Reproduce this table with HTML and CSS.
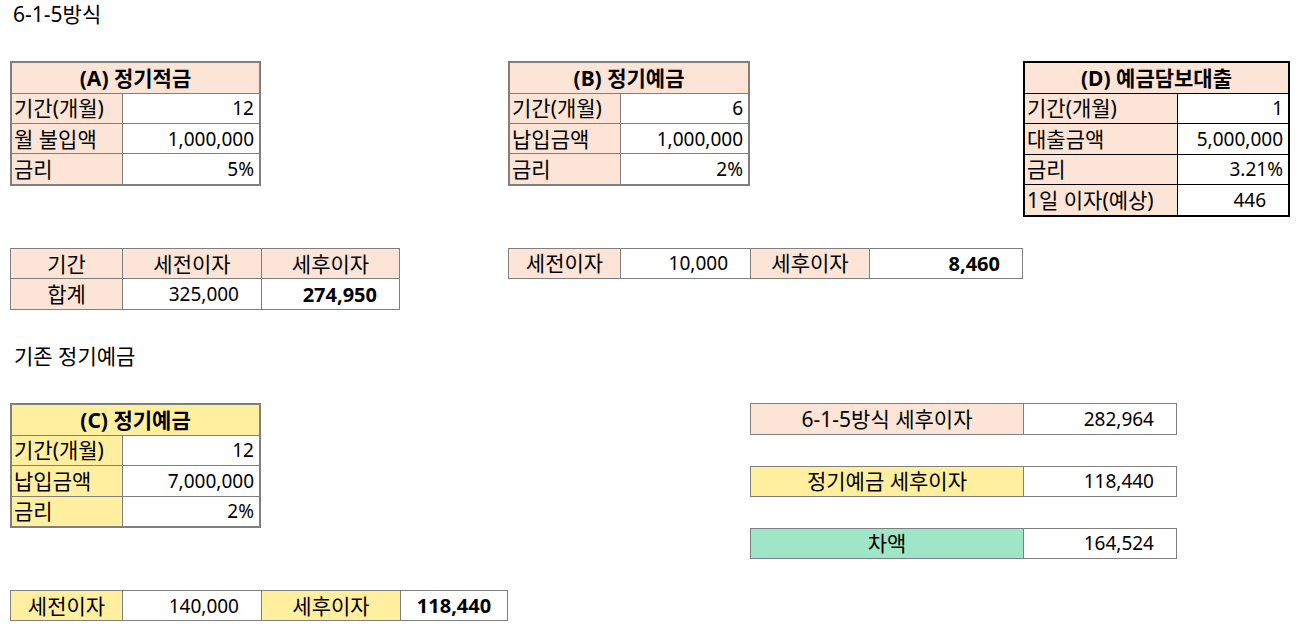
FILE: index.html
```html
<!DOCTYPE html>
<html lang="ko">
<head>
<meta charset="utf-8">
<title>6-1-5방식</title>
<link rel="stylesheet" href="styles.css">
</head>
<body>
<div class="sheet">
  <div class="title t1">6-1-5방식</div>

  <div class="box thick tA">
    <div class="c hd peach span2">(A) 정기적금</div>
    <div class="c lab peach">기간(개월)</div><div class="c num">12</div>
    <div class="c lab peach">월 불입액</div><div class="c num">1,000,000</div>
    <div class="c lab peach">금리</div><div class="c num">5%</div>
  </div>

  <div class="box thick tB">
    <div class="c hd peach span2">(B) 정기예금</div>
    <div class="c lab peach">기간(개월)</div><div class="c num">6</div>
    <div class="c lab peach">납입금액</div><div class="c num">1,000,000</div>
    <div class="c lab peach">금리</div><div class="c num">2%</div>
  </div>

  <div class="box thick black tD">
    <div class="c hd peach span2">(D) 예금담보대출</div>
    <div class="c lab peach">기간(개월)</div><div class="c num">1</div>
    <div class="c lab peach">대출금액</div><div class="c num">5,000,000</div>
    <div class="c lab peach">금리</div><div class="c num">3.21%</div>
    <div class="c lab peach">1일 이자(예상)</div><div class="c acct">446</div>
  </div>

  <div class="box sA">
    <div class="c ctr peach">기간</div><div class="c ctr peach">세전이자</div><div class="c ctr peach">세후이자</div>
    <div class="c ctr peach">합계</div><div class="c acct">325,000</div><div class="c acct b">274,950</div>
  </div>

  <div class="box sB">
    <div class="c ctr peach">세전이자</div><div class="c acct">10,000</div>
    <div class="c ctr peach">세후이자</div><div class="c acct b">8,460</div>
  </div>

  <div class="title t2">기존 정기예금</div>

  <div class="box thick tC">
    <div class="c hd yellow span2">(C) 정기예금</div>
    <div class="c lab yellow">기간(개월)</div><div class="c num">12</div>
    <div class="c lab yellow">납입금액</div><div class="c num">7,000,000</div>
    <div class="c lab yellow">금리</div><div class="c num">2%</div>
  </div>

  <div class="box cmp r1">
    <div class="c ctr peach">6-1-5방식 세후이자</div><div class="c acct">282,964</div>
  </div>
  <div class="box cmp r2">
    <div class="c ctr yellow">정기예금 세후이자</div><div class="c acct">118,440</div>
  </div>
  <div class="box cmp r3">
    <div class="c ctr green">차액</div><div class="c acct">164,524</div>
  </div>

  <div class="box sC">
    <div class="c ctr yellow">세전이자</div><div class="c acct">140,000</div>
    <div class="c ctr yellow">세후이자</div><div class="c ctr b">118,440</div>
  </div>
</div>
</body>
</html>
```

FILE: styles.css
```css
* { box-sizing: border-box; }

html, body {
  margin: 0;
  padding: 0;
  background: #ffffff;
}

body {
  font-family: "Noto Sans", "Noto Sans CJK KR", sans-serif;
  font-size: 21px;
  color: #000000;
  overflow: hidden;
}

.sheet {
  display: grid;
  grid-template-columns: 112px 139px 139px 108px 112px 130px 119px 154px 154px 113px;
  grid-template-rows: repeat(20, 31.12px);
  margin: -1px 0 0 10px;
  width: 1280px;
}

.title {
  display: flex;
  align-items: center;
  padding-left: 3px;
  white-space: nowrap;
  line-height: 1;
}
.t1 { grid-column: 1 / 3; grid-row: 1; }
.t2 { grid-column: 1 / 3; grid-row: 12; padding-left: 4px; }

.box {
  display: grid;
  gap: 1px;
  background: #7f7f7f;
  border: 1px solid #7f7f7f;
  grid-auto-rows: 1fr;
}
.box.thick { border-width: 2px; }
.box.black { background: #000000; border-color: #000000; }

.tA { grid-column: 1 / 3; grid-row: 3 / 7; grid-template-columns: 110px 1fr; }
.tB { grid-column: 5 / 7; grid-row: 3 / 7; grid-template-columns: 110px 1fr; }
.tD { grid-column: 9 / 11; grid-row: 3 / 8; grid-template-columns: 152px 1fr; }
.tC { grid-column: 1 / 3; grid-row: 14 / 18; grid-template-columns: 110px 1fr; }

.sA { grid-column: 1 / 4; grid-row: 9 / 11; grid-template-columns: 111px 138px 1fr; }
.sB { grid-column: 5 / 9; grid-row: 9; grid-template-columns: 111px 129px 118px 1fr; }
.sC { grid-column: 1 / 5; grid-row: 20; grid-template-columns: 111px 138px 138px 1fr; }

.cmp { grid-column: 7 / 10; grid-template-columns: 272px 1fr; }
.r1 { grid-row: 14; }
.r2 { grid-row: 16; }
.r3 { grid-row: 18; }

.c {
  display: flex;
  align-items: center;
  background: #ffffff;
  white-space: nowrap;
  line-height: 1;
  padding-top: 1px;
  min-width: 0;
  overflow: hidden;
}
.span2 { grid-column: 1 / 3; }

.hd { justify-content: center; font-weight: 700; }
.lab { justify-content: flex-start; padding-left: 2px; }
.num { justify-content: flex-end; padding-right: 5px; font-size: 19px; }
.acct { justify-content: flex-end; padding-right: 22px; font-size: 19px; }
.ctr { justify-content: center; }
.b { font-weight: 700; font-size: 20px; }

.peach { background: #fce4d6; }
.yellow { background: #ffef9f; }
.green { background: #9fe5c8; }
```
